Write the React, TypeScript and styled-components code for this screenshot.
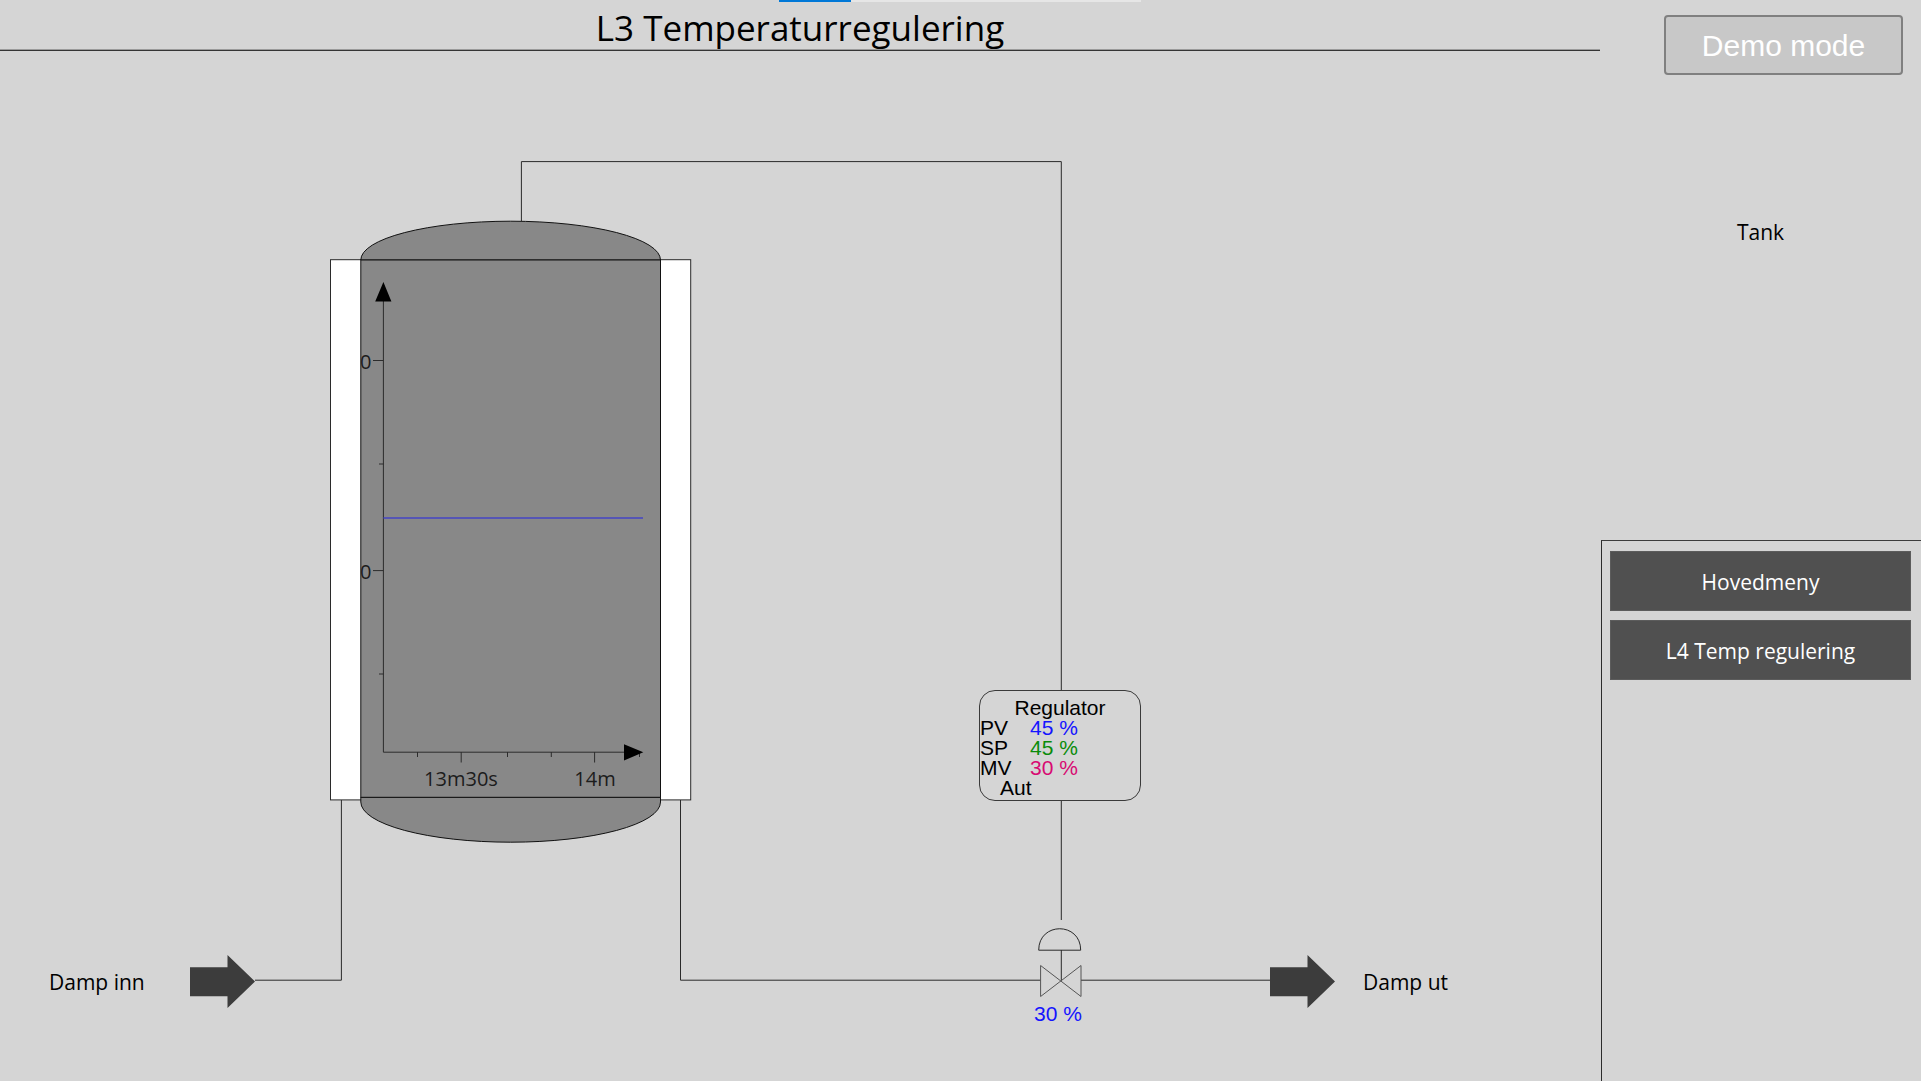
import React from "react";
import styled, { createGlobalStyle } from "styled-components";

const sans = `"Open Sans", "Noto Sans", sans-serif`;
const arial = `"Liberation Sans", Arial, sans-serif`;

const GlobalStyle = createGlobalStyle`
  * { box-sizing: border-box; }
  body { margin: 0; background: #d5d5d5; color: #000; font-family: ${sans}; }
`;

const Page = styled.div`
  position: relative;
  display: grid;
  grid-template-columns: minmax(0, 1fr) 321px;
  min-height: 100vh;
`;

const LoadTrack = styled.div`
  position: absolute;
  top: 0;
  left: 779px;
  width: 362px;
  height: 2px;
  background: #e6e6e6;
`;

const LoadBar = styled.div`
  width: 20%;
  height: 100%;
  background: #0078d7;
`;

const Main = styled.main`
  display: flex;
  flex-direction: column;
`;

const Header = styled.header`
  height: 51px;
  display: flex;
  justify-content: center;
  border-bottom: 1px solid #353535;
  box-shadow: inset 0 -1px 0 #9a9a9a;
`;

const Title = styled.h1`
  margin: 0;
  font-size: 35px;
  line-height: 56px;
  font-weight: 400;
  white-space: nowrap;
`;

const Canvas = styled.section`
  position: relative;
  flex: 1;
  overflow: hidden;
`;

const Drawing = styled.svg`
  display: block;
`;

const AxisText = styled.text`
  font-family: ${sans};
  font-size: 20px;
  fill: #1c1c1c;
`;

const Tag = styled.span<{ $x: number; $y: number; $value?: boolean }>`
  position: absolute;
  left: ${(p) => p.$x}px;
  top: ${(p) => p.$y}px;
  font-family: ${(p) => (p.$value ? arial : sans)};
  font-size: 21px;
  line-height: 28px;
  color: ${(p) => (p.$value ? "#1414ff" : "#000")};
  white-space: nowrap;
`;

const Controller = styled.div`
  position: absolute;
  left: 979px;
  top: 639px;
  width: 162px;
  height: 111px;
  padding-top: 7px;
  border: 1px solid #3a3a3a;
  border-radius: 16px;
  font-family: ${arial};
  font-size: 21px;
  line-height: 20px;
`;

const ControllerName = styled.div`
  text-align: center;
`;

const Reading = styled.div`
  display: grid;
  grid-template-columns: 50px 1fr;
`;

const ReadingValue = styled.span<{ $color: string }>`
  color: ${(p) => p.$color};
`;

const Mode = styled.div`
  padding-left: 20px;
`;

const Side = styled.aside`
  display: grid;
  grid-template-rows: 1fr 1fr;
`;

const Info = styled.section`
  display: flex;
  flex-direction: column;
  align-items: center;
  padding-top: 15px;
  gap: 143px;
`;

const DemoButton = styled.button`
  width: 239px;
  height: 60px;
  margin-left: 46px;
  padding: 2px 0 0;
  border: 2px solid #808080;
  border-radius: 4px;
  background: #c8c8c8;
  color: #fff;
  font-family: ${arial};
  font-size: 30px;
`;

const AreaName = styled.div`
  font-size: 21px;
  line-height: 28px;
`;

const Nav = styled.nav`
  display: flex;
  flex-direction: column;
  gap: 9px;
  padding: 10px 10px 10px 8px;
  margin: -1px 0 0 1px;
  border-top: 1px solid #3c3c3c;
  border-left: 1px solid #2c2c2c;
`;

const NavButton = styled.button`
  height: 60px;
  padding: 2px 0 0;
  border: 1px solid #5c5c5c;
  background: #505050;
  color: #fff;
  font-family: ${sans};
  font-size: 21px;
`;

const readings = [
  { name: "PV", value: "45 %", color: "#1414ff" },
  { name: "SP", value: "45 %", color: "#0a8c0a" },
  { name: "MV", value: "30 %", color: "#d80a72" },
];

const yTicks = [
  { y: 360.5, from: 373 },
  { y: 464, from: 379 },
  { y: 570.6, from: 373 },
  { y: 674, from: 379 },
];

const xTicks = [
  { x: 417.5, to: 757 },
  { x: 461.2, to: 762.5 },
  { x: 507.5, to: 757 },
  { x: 551.3, to: 757 },
  { x: 594.6, to: 762.5 },
  { x: 639.5, to: 757 },
];

const FlowArrow = ({ x }: { x: number }) => (
  <path
    d={`M${x} 967.3H${x + 37.5}V955L${x + 65} 981.5L${x + 37.5} 1008V996.3H${x}Z`}
    fill="#3c3c3c"
  />
);

const ProcessDrawing = () => (
  <Drawing width="1600" height="1030" viewBox="0 51 1600 1030" aria-hidden="true">
    <g fill="none" stroke="#2a2a2a">
      <path d="M255 980.2H341.4V800" />
      <path d="M680.5 800V980.2H1040.5M1081 980.2H1270" />
      <path d="M521.4 221V161.6H1061.3V690M1061.3 801V920" />
      <path d="M1038.7 950.2C1038.7 921.6 1080.7 921.6 1080.7 950.2ZM1061.3 950V980" />
      <path d="M1040.6 965.5L1081 996.5V965.5L1040.6 996.5Z" stroke="#555" />
    </g>

    <rect x="330.5" y="259.7" width="360.2" height="540.2" fill="#fff" stroke="#2a2a2a" />
    <g fill="#888" stroke="#111">
      <path d="M360.8 260A149.85 38.8 0 0 1 660.5 260Z" />
      <path d="M360.8 797.3V802A149.85 40.2 0 0 0 660.5 802V797.3Z" />
      <rect x="360.8" y="260" width="299.7" height="537.3" />
    </g>

    <g stroke="#2c2c2c">
      <path d="M383.4 300V752.2H626" fill="none" />
      {yTicks.map((t) => (
        <path key={t.y} d={`M${t.from} ${t.y}H383.4`} />
      ))}
      {xTicks.map((t) => (
        <path key={t.x} d={`M${t.x} 752V${t.to}`} />
      ))}
    </g>
    <path d="M383.4 282L391.4 301.4H375.2ZM643.3 752.3L624 744.2V760.4Z" />
    <path d="M383.4 518.1H643" stroke="#4444c4" strokeWidth="1.5" />
    <AxisText x="360" y="369">0</AxisText>
    <AxisText x="360" y="579">0</AxisText>
    <AxisText x="461" y="786" textAnchor="middle">13m30s</AxisText>
    <AxisText x="595" y="786" textAnchor="middle">14m</AxisText>

    <FlowArrow x={190} />
    <FlowArrow x={1270} />
  </Drawing>
);

export default function App() {
  return (
    <>
      <GlobalStyle />
      <Page>
        <Main>
          <Header>
            <Title>L3 Temperaturregulering</Title>
          </Header>
          <Canvas>
            <ProcessDrawing />
            <Tag $x={49} $y={917}>Damp inn</Tag>
            <Tag $x={1363} $y={917}>Damp ut</Tag>
            <Tag $x={1034} $y={949} $value>30 %</Tag>
            <Controller>
              <ControllerName>Regulator</ControllerName>
              {readings.map((r) => (
                <Reading key={r.name}>
                  <span>{r.name}</span>
                  <ReadingValue $color={r.color}>{r.value}</ReadingValue>
                </Reading>
              ))}
              <Mode>Aut</Mode>
            </Controller>
          </Canvas>
        </Main>
        <Side>
          <Info>
            <DemoButton type="button">Demo mode</DemoButton>
            <AreaName>Tank</AreaName>
          </Info>
          <Nav>
            <NavButton type="button">Hovedmeny</NavButton>
            <NavButton type="button">L4 Temp regulering</NavButton>
          </Nav>
        </Side>
        <LoadTrack>
          <LoadBar />
        </LoadTrack>
      </Page>
    </>
  );
}
